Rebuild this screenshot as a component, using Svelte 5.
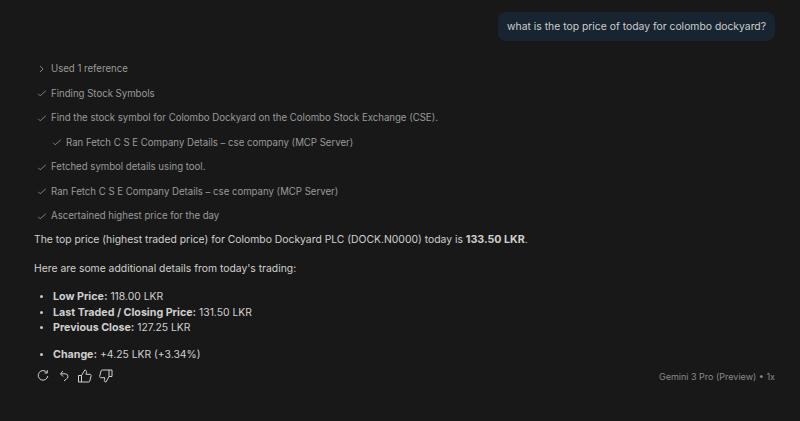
<script>
  const steps = [
    { text: "Used 1 reference", icon: "chevron" },
    { text: "Finding Stock Symbols", icon: "check" },
    { text: "Find the stock symbol for Colombo Dockyard on the Colombo Stock Exchange (CSE).", icon: "check" },
    { text: "Ran Fetch C S E Company Details – cse company (MCP Server)", icon: "check", nested: true },
    { text: "Fetched symbol details using tool.", icon: "check" },
    { text: "Ran Fetch C S E Company Details – cse company (MCP Server)", icon: "check" },
    { text: "Ascertained highest price for the day", icon: "check" }
  ];
  const prices = [
    { label: "Low Price:", value: "118.00 LKR" },
    { label: "Last Traded / Closing Price:", value: "131.50 LKR" },
    { label: "Previous Close:", value: "127.25 LKR" }
  ];
</script>

<main class="chat">
  <div class="user-row">
    <div class="bubble">what is the top price of today for colombo dockyard?</div>
  </div>

  <ul class="steps">
    {#each steps as s}
      <li class="step" class:nested={s.nested}>
        <svg class="step-icon" viewBox="0 0 12 12" width="12" height="12" fill="none" stroke="currentColor" stroke-width="0.8">
          {#if s.icon === "chevron"}
            <path d="M4 3 7 6 4 9" />
          {:else}
            <path d="M2.200 6.800 4.200 8.800 9.800 3.800" />
          {/if}
        </svg>
        <span>{s.text}</span>
      </li>
    {/each}
  </ul>

  <p class="lead">The top price (highest traded price) for Colombo Dockyard PLC (DOCK.N0000) today is <strong>133.50 LKR</strong>.</p>
  <p class="sub">Here are some additional details from today's trading:</p>

  <ul class="list">
    {#each prices as p}
      <li><strong>{p.label}</strong> {p.value}</li>
    {/each}
  </ul>
  <ul class="list second">
    <li><strong>Change:</strong> +4.25 LKR (+3.34%)</li>
  </ul>

  <footer class="actions">
    <div class="icons">
      <svg viewBox="0 0 16 16" width="16" height="16" fill="none" stroke="currentColor" stroke-width="1">
        <path d="M11.800 4.400A4.800 4.800 0 1 0 12.800 8" />
        <path d="M12.300 2.200v2.800H9.500" />
      </svg>
      <svg viewBox="0 0 16 16" width="16" height="16" fill="none" stroke="currentColor" stroke-width="1">
        <path d="M5 5.800h4.500a2.700 2.700 0 0 1 .8 5.200L8 13" />
        <path d="M7 3 4.500 5.800 7 8.500" />
      </svg>
      <svg viewBox="0 0 16 16" width="16" height="16" fill="none" stroke="currentColor" stroke-width="1">
        <path d="M1.500 7.500h3v6.500h-3zM4.500 7.500 7.800 2c1.400 0 1.900 1 1.600 2.200L9 6.300h4c.9 0 1.300.8 1.100 1.500l-1.300 5.200c-.2.700-.7 1-1.300 1H4.500" />
      </svg>
      <svg viewBox="0 0 16 16" width="16" height="16" fill="none" stroke="currentColor" stroke-width="1">
        <path d="M14 8.500h-3V2h3zM11 8.500 8 14c-1.400 0-1.900-1-1.600-2.200l.4-2.100h-4c-.9 0-1.300-.8-1.100-1.500L3 3c.2-.7.700-1 1.300-1H11" />
      </svg>
    </div>
    <span class="model">Gemini 3 Pro (Preview) • 1x</span>
  </footer>
</main>

<style>
  :global(body) {
    background: #181818;
  }
  .chat {
    box-sizing: border-box;
    width: 800px;
    height: 421px;
    padding: 12px 25px 0 34px;
    font-family: Inter, "Liberation Sans", sans-serif;
    font-size: 10.36px;
    line-height: 15px;
    color: #d0d0d0;
    overflow: hidden;
  }
  .user-row {
    display: flex;
    justify-content: flex-end;
  }
  .bubble {
    background: #182530;
    border-radius: 8px;
    padding: 7px 9px;
    color: #cccccc;
  }
  .steps {
    list-style: none;
    margin: 20px 0 0;
    padding: 0;
    display: flex;
    flex-direction: column;
    gap: 9.500px;
    font-size: 9.620px;
    color: #9a9a9a;
  }
  .step {
    display: flex;
    align-items: center;
    gap: 3px;
  }
  .step.nested {
    margin-left: 15px;
  }
  .step-icon {
    flex: none;
    margin-left: 2px;
  }
  p {
    margin: 0;
  }
  .lead {
    margin-top: 9px;
  }
  .sub {
    margin-top: 14px;
  }
  strong {
    font-weight: 700;
    font-size: 10.68px;
    line-height: 1;
  }
  .list {
    list-style: none;
    margin: 13px 0 0;
    padding: 0 0 0 19px;
  }
  .list li {
    position: relative;
    line-height: 15.500px;
  }
  .list li::before {
    content: "";
    position: absolute;
    left: -13px;
    top: 6px;
    width: 3px;
    height: 3px;
    border-radius: 50%;
    background: #c8c8c8;
  }
  .list.second {
    margin-top: 11px;
  }
  .actions {
    display: flex;
    justify-content: space-between;
    align-items: center;
    margin-top: 6px;
  }
  .icons {
    display: flex;
    gap: 5px;
    margin-left: 1px;
  }
  .model {
    font-size: 9px;
    color: #8a8a8a;
  }
</style>
